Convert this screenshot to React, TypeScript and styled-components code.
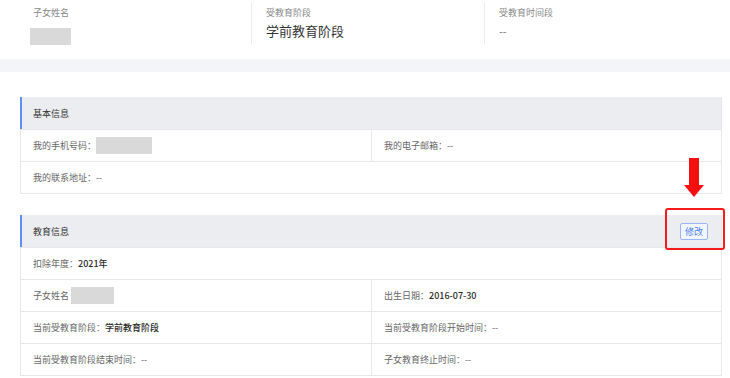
import styled, { createGlobalStyle } from "styled-components";

const GlobalStyle = createGlobalStyle`
  body {
    margin: 0;
    background: #fff;
    font-family: "Noto Sans CJK SC", "Noto Sans", sans-serif;
  }
`;

const Page = styled.div`
  width: 730px;
  height: 378px;
  overflow: hidden;
`;

const Summary = styled.div`
  display: grid;
  grid-template-columns: repeat(3, 233px);
  padding: 3px 0 0 18px;
  height: 56px;
  box-sizing: border-box;
`;

const SummaryItem = styled.div<{ $divider?: boolean }>`
  height: 41px;
  padding-left: 14px;
  border-left: 1px solid ${(p) => (p.$divider ? "#ececec" : "transparent")};
  box-sizing: border-box;
`;

const SummaryLabel = styled.div`
  font-size: 9px;
  line-height: 14px;
  padding-top: 3px;
  color: #888;
`;

const SummaryValue = styled.div`
  font-size: 13px;
  line-height: 20px;
  margin-top: 1px;
  color: #333;
`;

const SummaryEmpty = styled.div`
  font-size: 11px;
  line-height: 20px;
  margin-top: 1px;
  color: #777;
`;

const Masked = styled.span<{ $w: number; $h: number }>`
  display: inline-block;
  width: ${(p) => p.$w}px;
  height: ${(p) => p.$h}px;
  background: #d9d9d9;
  vertical-align: middle;
`;

const Band = styled.div`
  height: 13px;
  margin-top: 3px;
  background: #f4f5f8;
`;

const Content = styled.div`
  display: flex;
  flex-direction: column;
  gap: 21px;
  padding: 25px 8px 0 20px;
`;

const Card = styled.div`
  border: 1px solid #e6e7ea;
  border-left: none;
  border-top: none;
`;

const CardHeader = styled.div`
  display: flex;
  align-items: center;
  justify-content: space-between;
  height: 32px;
  padding: 0 13px 0 11px;
  background: #ebedf1;
  border-left: 2px solid #5b8ff9;
`;

const CardTitle = styled.div`
  font-size: 9px;
  color: #333;
`;

const Row = styled.div<{ $cols?: number }>`
  display: grid;
  grid-template-columns: repeat(${(p) => p.$cols ?? 1}, 1fr);
  height: 31px;
  border-top: 1px solid #e6e7ea;
  border-left: 1px solid #e6e7ea;
`;

const Cell = styled.div`
  display: flex;
  align-items: center;
  padding-left: 12px;
  font-size: 9px;
  color: #666;

  & + & {
    border-left: 1px solid #e6e7ea;
  }
`;

const Value = styled.span`
  color: #2a2a2a;
  font-weight: 500;
`;

const EditWrap = styled.div`
  position: relative;
`;

const EditButton = styled.button`
  display: block;
  width: 28px;
  height: 17px;
  padding: 0;
  border: 1px solid #9ab5f5;
  border-radius: 2px;
  background: #f3f6fe;
  color: #4f7ff0;
  font-family: inherit;
  font-size: 9px;
  line-height: 15px;
`;

const Highlight = styled.div`
  position: absolute;
  left: -15px;
  top: -15px;
  width: 60px;
  height: 42px;
  border: 2px solid #f51b1b;
  border-radius: 3px;
  box-sizing: border-box;
`;

const Arrow = styled.svg`
  position: absolute;
  left: 4px;
  top: -65px;
`;

export default function App() {
  return (
    <Page>
      <GlobalStyle />
      <Summary>
        <SummaryItem>
          <SummaryLabel>子女姓名</SummaryLabel>
          <div style={{ marginTop: 2, marginLeft: -3 }}>
            <Masked $w={41} $h={17} />
          </div>
        </SummaryItem>
        <SummaryItem $divider>
          <SummaryLabel>受教育阶段</SummaryLabel>
          <SummaryValue>学前教育阶段</SummaryValue>
        </SummaryItem>
        <SummaryItem $divider>
          <SummaryLabel>受教育时间段</SummaryLabel>
          <SummaryEmpty>--</SummaryEmpty>
        </SummaryItem>
      </Summary>
      <Band />
      <Content>
        <Card>
          <CardHeader>
            <CardTitle>基本信息</CardTitle>
          </CardHeader>
          <Row $cols={2}>
            <Cell>
              我的手机号码：
              <Masked $w={56} $h={17} />
            </Cell>
            <Cell>我的电子邮箱：--</Cell>
          </Row>
          <Row>
            <Cell>我的联系地址：--</Cell>
          </Row>
        </Card>
        <Card>
          <CardHeader>
            <CardTitle>教育信息</CardTitle>
            <EditWrap>
              <Arrow width="20" height="39" viewBox="0 0 20 39">
                <rect x="5" y="0" width="10" height="28" fill="#f51010" />
                <polygon points="0,27 20,27 10,39" fill="#f51010" />
              </Arrow>
              <EditButton>修改</EditButton>
              <Highlight />
            </EditWrap>
          </CardHeader>
          <Row>
            <Cell>
              扣除年度：<Value>2021年</Value>
            </Cell>
          </Row>
          <Row $cols={2}>
            <Cell>
              子女姓名&nbsp;
              <Masked $w={43} $h={17} />
            </Cell>
            <Cell>
              出生日期：<Value>2016-07-30</Value>
            </Cell>
          </Row>
          <Row $cols={2}>
            <Cell>
              当前受教育阶段：<Value>学前教育阶段</Value>
            </Cell>
            <Cell>当前受教育阶段开始时间：--</Cell>
          </Row>
          <Row $cols={2}>
            <Cell>当前受教育阶段结束时间：--</Cell>
            <Cell>子女教育终止时间：--</Cell>
          </Row>
        </Card>
      </Content>
    </Page>
  );
}
